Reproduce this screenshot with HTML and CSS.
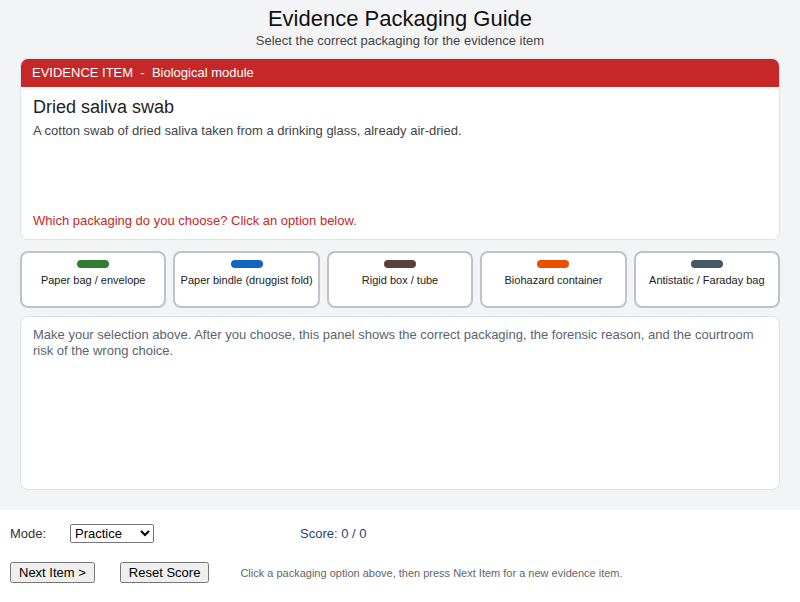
FILE: index.html
```html
<!DOCTYPE html>
<html lang="en">
  <head>
    <meta charset="UTF-8" />
    <meta name="viewport" content="width=device-width, initial-scale=1.0" />
    <title>Evidence Packaging Guide</title>
    <link rel="stylesheet" href="styles.css">
  </head>

  <body>
    <div class="stage">
      <h1 class="title">Evidence Packaging Guide</h1>
      <p class="subtitle">Select the correct packaging for the evidence item</p>

      <div class="card">
        <div class="card-head">EVIDENCE ITEM  -  Biological module</div>
        <div class="card-body">
          <h2 class="item-name">Dried saliva swab</h2>
          <p class="item-desc">A cotton swab of dried saliva taken from a drinking glass, already air-dried.</p>
          <p class="prompt">Which packaging do you choose? Click an option below.</p>
        </div>
      </div>

      <div class="options">
        <button class="opt"><span class="bar green"></span>Paper bag / envelope</button>
        <button class="opt"><span class="bar blue"></span>Paper bindle (druggist fold)</button>
        <button class="opt"><span class="bar brown"></span>Rigid box / tube</button>
        <button class="opt"><span class="bar orange"></span>Biohazard container</button>
        <button class="opt"><span class="bar slate"></span>Antistatic / Faraday bag</button>
      </div>

      <div class="feedback">
        Make your selection above. After you choose, this panel shows the correct packaging, the forensic reason, and the courtroom risk of the wrong choice.
      </div>
    </div>

    <div class="controls">
      <div class="row">
        <label class="mode-label" for="mode">Mode:</label>
        <select id="mode" class="mode">
          <option>Practice</option>
          <option>Quiz</option>
        </select>
        <span class="score">Score: 0 / 0</span>
      </div>
      <div class="row">
        <button class="btn">Next Item &gt;</button>
        <button class="btn reset">Reset Score</button>
        <span class="hint">Click a packaging option above, then press Next Item for a new evidence item.</span>
      </div>
    </div>
  </body>
</html>
```

FILE: styles.css
```css
body {
  margin: 0;
  font-family: "Liberation Sans", Arial, sans-serif;
  background: #fff;
}
.stage {
  background: #f3f4f6;
  height: 510px;
  box-sizing: border-box;
  padding: 6px 20px 0;
}
.title {
  margin: 0;
  text-align: center;
  font-size: 22px;
  font-weight: normal;
  line-height: 26px;
  color: #111;
}
.subtitle {
  margin: 1px 0 0;
  text-align: center;
  font-size: 13px;
  line-height: 16px;
  color: #444;
}
.card {
  margin-top: 9px;
  background: #fff;
  border: 1px solid #dde3ec;
  border-radius: 8px;
  overflow: hidden;
}
.card-head {
  background: #c62828;
  color: #fff;
  font-size: 13px;
  height: 29px;
  line-height: 29px;
  padding-left: 12px;
  white-space: pre;
  margin: -1px -1px 0;
}
.card-body {
  height: 152px;
  box-sizing: border-box;
  padding: 9px 12px 10px;
  display: flex;
  flex-direction: column;
}
.item-name {
  margin: 0;
  font-size: 18px;
  font-weight: normal;
  line-height: 22px;
  color: #222;
}
.item-desc {
  margin: 5px 0 0;
  font-size: 13px;
  line-height: 16px;
  color: #444;
}
.prompt {
  margin: auto 0 0;
  font-size: 13px;
  line-height: 16px;
  color: #c62828;
}
.options {
  display: flex;
  gap: 7px;
  margin-top: 11px;
}
.opt {
  flex: 1;
  height: 57px;
  background: #fff;
  border: 2px solid #bcc3cb;
  border-radius: 8px;
  font-family: inherit;
  font-size: 11px;
  color: #222;
  display: flex;
  flex-direction: column;
  align-items: center;
  padding: 7px 0 0;
  cursor: pointer;
}
.bar {
  display: block;
  width: 32px;
  height: 8px;
  border-radius: 4px;
  margin-bottom: 6px;
}
.green { background: #2e7d32; }
.blue { background: #1565c0; }
.brown { background: #5d4037; }
.orange { background: #e65100; }
.slate { background: #455a64; }
.feedback {
  margin-top: 8px;
  height: 174px;
  box-sizing: border-box;
  background: #fff;
  border: 1px solid #d8e0ec;
  border-radius: 8px;
  padding: 10px 12px;
  font-size: 13px;
  line-height: 16px;
  color: #5a6470;
}
.controls {
  padding: 14px 10px 0;
}
.row {
  display: flex;
  align-items: center;
  font-size: 13px;
}
.row + .row {
  margin-top: 19px;
}
.mode-label {
  color: #333;
  width: 60px;
}
.mode {
  width: 84px;
  height: 19px;
  font-family: inherit;
  font-size: 13px;
}
.score {
  margin-left: 146px;
  color: #1f3f7a;
}
.btn {
  font-family: inherit;
  font-size: 13px;
  height: 21px;
  padding: 0 7px;
}
.reset {
  margin-left: 25px;
}
.hint {
  margin-left: 31px;
  font-size: 11px;
  color: #666;
}
```
